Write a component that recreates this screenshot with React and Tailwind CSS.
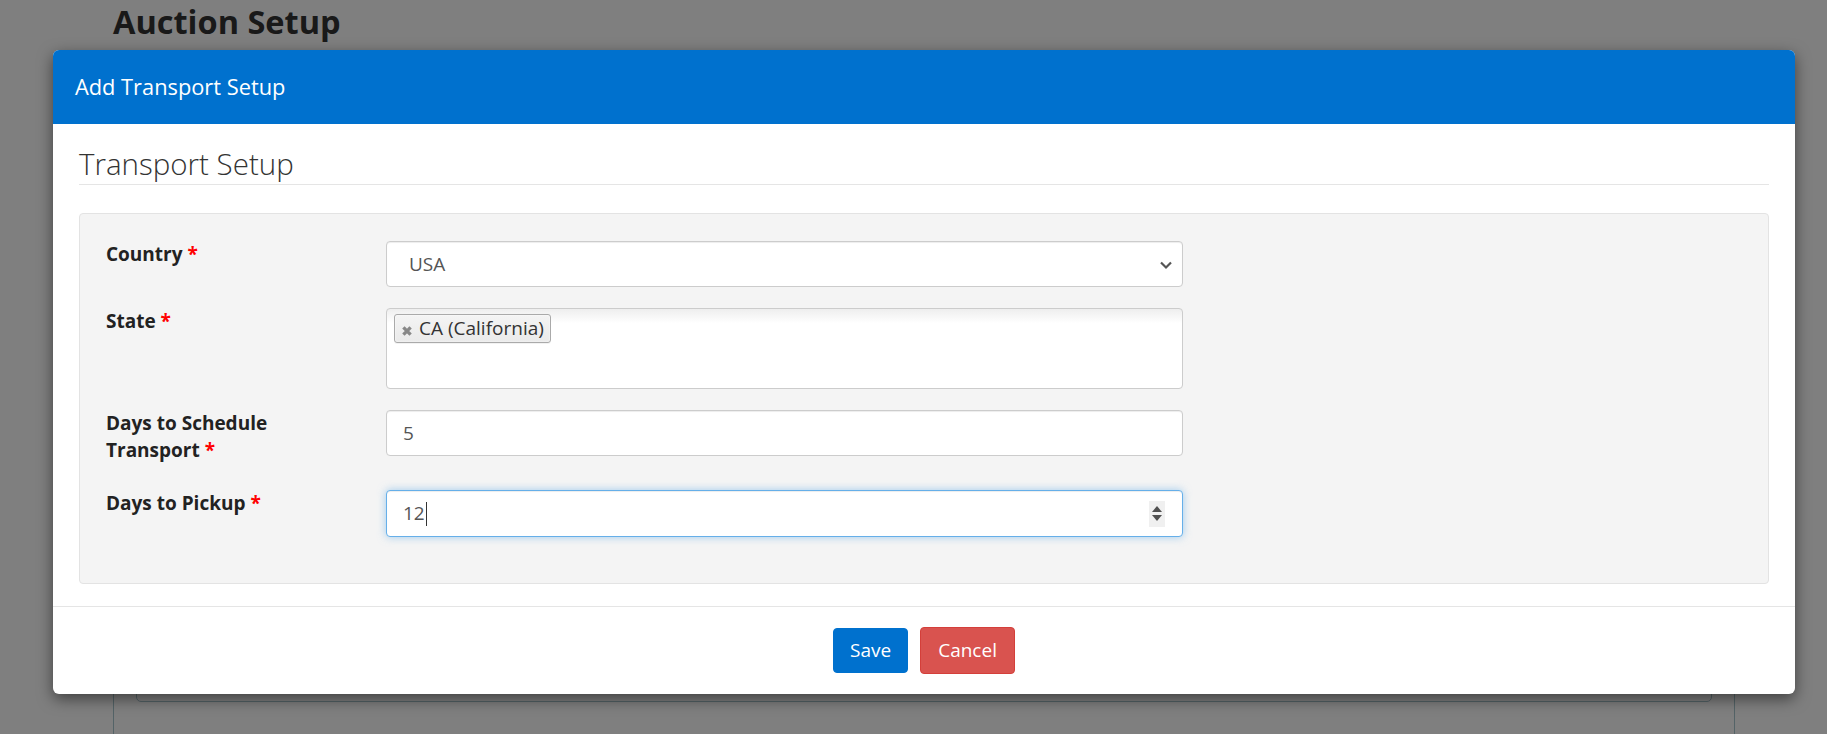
export default function App() {
  const font = { fontFamily: '"Open Sans", "Noto Sans", Arial, sans-serif' };

  return (
    <div className="relative h-[734px] w-full overflow-hidden bg-white text-[#333]" style={font}>
      {/* page behind the modal */}
      <div className="pl-[113px] pt-[1px] h-[47px]">
        <h3 className="text-[32.5px] font-bold leading-[42px] text-[#333]">Auction Setup</h3>
      </div>
      <div className="ml-[113px] w-[1622px] h-[700px] border-x border-[#a9c6cf]">
        <div className="mx-[22px] mt-[10px] h-[645px] rounded-b-[5px] border border-[#a9c6cf]" />
      </div>

      {/* backdrop */}
      <div className="absolute inset-0 bg-black/50" />

      {/* modal */}
      <div className="absolute left-[53px] top-[50px] w-[1742px] rounded-[6px] bg-white shadow-[0_5px_15px_rgba(0,0,0,0.5)]">
        <div className="flex h-[74px] items-center rounded-t-[6px] bg-[#0071ce] px-[22px]">
          <h4 className="text-[21.8px] leading-[28px] text-white">Add Transport Setup</h4>
        </div>

        <div className="px-[26px] pt-[22px] pb-[22px]">
          <div className="border-b border-[#e5e5e5] pb-[2px] text-[29.5px] font-light leading-[36px] text-[#333]">
            Transport Setup
          </div>

          <div className="mt-[28px] rounded-[4px] border border-[#e3e3e3] bg-[#f4f4f4] px-[26px] pt-[27px] pb-[46px] text-[19px]">
            <FormRow label="Country" mb="mb-[21px]">
              <div className="flex h-[46px] w-[797px] items-center justify-between rounded-[4px] border border-[#ccc] bg-white pl-[22px] pr-[9px] text-[#555] shadow-[inset_0_1px_1px_rgba(0,0,0,0.075)]">
                <span>USA</span>
                <svg width="14" height="10" viewBox="0 0 14 10" className="mt-[1px]">
                  <path d="M2 2.5 L7 7.5 L12 2.5" fill="none" stroke="#555" strokeWidth="2.2" />
                </svg>
              </div>
            </FormRow>

            <FormRow label="State" mb="mb-[21px]">
              <div className="h-[81px] w-[797px] rounded-[4px] border border-[#ccc] bg-[linear-gradient(#eeeeee_0%,#ffffff_18%)] px-[7px] pt-[5px]">
                <span className="inline-flex h-[29px] items-center gap-[6px] rounded-[3px] border border-[#aaa] bg-[linear-gradient(#f4f4f4,#eaeaea)] pl-[6px] pr-[6px] text-[19px] text-[#333] shadow-[0_0_2px_white_inset,0_1px_0_rgba(0,0,0,0.05)]">
                  <svg width="12" height="12" viewBox="0 0 10 10" className="mt-[5px]">
                    <path d="M2 2 L8 8 M8 2 L2 8" stroke="#888" strokeWidth="2.8" />
                  </svg>
                  CA (California)
                </span>
              </div>
            </FormRow>

            <FormRow label="Days to Schedule Transport" mb="mb-[26px]">
              <div className="flex h-[46px] w-[797px] items-center rounded-[4px] border border-[#ccc] bg-white pl-[16px] text-[#555] shadow-[inset_0_1px_1px_rgba(0,0,0,0.075)]">
                5
              </div>
            </FormRow>

            <FormRow label="Days to Pickup" mb="mb-0">
              <div className="flex h-[47px] w-[797px] items-center justify-between rounded-[4px] border border-[#66afe9] bg-white pl-[16px] pr-[17px] text-[#555] shadow-[inset_0_1px_1px_rgba(0,0,0,0.075),0_0_8px_rgba(102,175,233,0.6)]">
                <span className="flex items-center">
                  12<span className="ml-[1px] inline-block h-[24px] w-[1px] bg-[#333]" />
                </span>
                <span className="flex h-[26px] w-[16px] flex-col items-center justify-center gap-[3px] bg-[#f0f0f0]">
                  <svg width="10" height="6" viewBox="0 0 10 6">
                    <path d="M5 0 L10 6 L0 6 Z" fill="#505050" />
                  </svg>
                  <svg width="10" height="6" viewBox="0 0 10 6">
                    <path d="M0 0 L10 0 L5 6 Z" fill="#505050" />
                  </svg>
                </span>
              </div>
            </FormRow>
          </div>
        </div>

        <div className="flex justify-center gap-[12px] border-t border-[#e5e5e5] pt-[21px] pb-[20px]">
          <button className="h-[45px] rounded-[4px] border border-[#0071ce] bg-[#0071ce] px-[16px] text-[19px] text-white">
            Save
          </button>
          <button className="h-[47px] -mt-[1px] rounded-[4px] border border-[#d43f3a] bg-[#d9534f] px-[17px] text-[19px] text-white">
            Cancel
          </button>
        </div>
      </div>
    </div>
  );
}

function FormRow({ label, mb, children }) {
  return (
    <div className={`flex ${mb}`}>
      <div className="w-[280px] shrink-0">
        <label className="block w-[220px] font-bold leading-[27px] text-[#222]">
          {label} <span className="text-[#f00]">*</span>
        </label>
      </div>
      {children}
    </div>
  );
}
